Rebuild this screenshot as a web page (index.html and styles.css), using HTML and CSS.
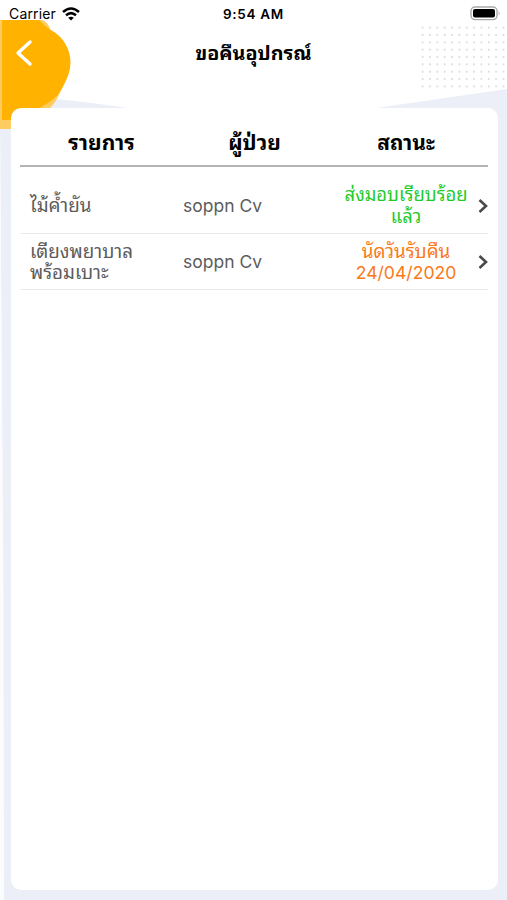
FILE: index.html
```
<!DOCTYPE html>
<html lang="th">
<head>
    <meta charset="UTF-8">
    <meta name="viewport" content="width=device-width, initial-scale=1.0">
    <title>ขอคืนอุปกรณ์</title>
    <link rel="stylesheet" href="styles.css">
</head>
<body>
    <div class="screen">
        <svg class="backdrop" width="507" height="900" viewBox="0 0 507 900">
            <defs>
                <pattern id="dots" x="419" y="24" width="7.35" height="7.35" patternUnits="userSpaceOnUse">
                    <circle cx="3.6" cy="3.6" r="1" fill="#dadada"/>
                </pattern>
            </defs>
            <path d="M0 96 C40 96 80 101 128 108 C210 122 310 118 376 108 L507 89 V900 H4 L2 400 L0 128 Z" fill="#eceff8"/>
            <path d="M0 128 L2 400 L3.5 600 V900 H0 Z" fill="#fbfcfe"/>
            <path d="M0 20 H42 Q48 22 50 29 L64 84 C60 92 57 102 49 109 L11 129 H0 Z" fill="#ffcc62"/>
            <path d="M2 20 H39 C43 24 46 27 51 30 C64 37 70.500 50 70.500 62 C70.500 73 66 81 61 90 C56 98 48 104 38 108.500 L11 120 H2 Z" fill="#ffb300"/>
            <rect x="419" y="24" width="88" height="66.2" fill="url(#dots)"/>
        </svg>

        <div class="statusbar">
            <div class="carrier">
                <span>Carrier</span>
                <svg width="18" height="14" viewBox="0 0 18 14" fill="none" stroke="#000" stroke-width="2.5">
                    <path d="M1 5 Q9 -2 17 5"/>
                    <path d="M4 8.3 Q9 4 14 8.3"/>
                    <path d="M9 13.4 L6.2 10.7 Q9 8.6 11.8 10.7 Z" fill="#000" stroke="none"/>
                </svg>
            </div>
            <div class="time">9:54 AM</div>
            <svg class="battery" width="31" height="15" viewBox="0 0 31 15">
                <rect x="1" y="1" width="26" height="12.6" rx="4" fill="#fff" stroke="#a9a9a9" stroke-width="1.4"/>
                <rect x="3" y="3" width="22" height="8.6" rx="2" fill="#000"/>
                <path d="M28.6 5 Q30.6 7.3 28.6 9.6 Z" fill="#a9a9a9"/>
            </svg>
        </div>

        <div class="header">
            <svg class="back" width="18" height="28" viewBox="0 0 18 28" fill="none" stroke="#fff" stroke-width="3.4" stroke-linecap="round" stroke-linejoin="round">
                <path d="M15 3 L3 14 L15 25"/>
            </svg>
            <h1 class="title">ขอคืนอุปกรณ์</h1>
        </div>

        <div class="card">
            <div class="row head">
                <div class="col-item">รายการ</div>
                <div class="col-patient">ผู้ป่วย</div>
                <div class="col-status">สถานะ</div>
            </div>
            <div class="row first">
                <div class="col-item">ไม้ค้ำยัน</div>
                <div class="col-patient name">soppn Cv</div>
                <div class="col-status green">ส่งมอบเรียบร้อย<br>แล้ว</div>
                <svg class="chevron" width="10" height="16" viewBox="0 0 10 16"><path d="M1.5 2 L8 8 L1.5 14"/></svg>
            </div>
            <div class="row">
                <div class="col-item">เตียงพยาบาล<br>พร้อมเบาะ</div>
                <div class="col-patient name">soppn Cv</div>
                <div class="col-status orange">นัดวันรับคืน<br><span class="date">24/04/2020</span></div>
                <svg class="chevron" width="10" height="16" viewBox="0 0 10 16"><path d="M1.5 2 L8 8 L1.5 14"/></svg>
            </div>
        </div>
    </div>
</body>
</html>
```
FILE: styles.css
```
* {
    box-sizing: border-box;
}
body {
    margin: 0;
    font-family: Inter, "Noto Sans Thai Looped", Loma, Waree, Garuda, "Noto Sans Thai", "Noto Sans", sans-serif;
    background-color: #fff;
    color: #000;
}
.screen {
    position: relative;
    width: 507px;
    height: 900px;
    overflow: hidden;
    display: flex;
    flex-direction: column;
}
.backdrop {
    position: absolute;
    top: 0;
    left: 0;
    z-index: -1;
}
.statusbar {
    display: grid;
    grid-template-columns: 1fr 1fr 1fr;
    align-items: center;
    height: 27px;
    padding: 0 6px 0 9px;
    font-size: 14px;
}
.carrier {
    display: flex;
    align-items: center;
    gap: 6px;
    letter-spacing: 0.15px;
}
.time {
    padding-right: 3px;
    text-align: center;
    font-weight: 600;
    font-size: 13.5px;
    letter-spacing: 0.7px;
}
.battery {
    justify-self: end;
}
.header {
    display: grid;
    grid-template-columns: 60px 1fr 60px;
    align-items: center;
    height: 51px;
}
.back {
    margin-left: 15px;
}
.title {
    margin: 0;
    text-align: center;
    font-size: 19.7px;
    font-weight: 700;
    line-height: 28px;
}
.card {
    width: 487px;
    height: 782px;
    margin: 30px 0 0 11px;
    padding: 0 10px 0 9px;
    border-radius: 10px;
    background-color: #fff;
}
.row {
    display: grid;
    grid-template-columns: 153px 153px 142px 20px;
    align-items: center;
    height: 56px;
    padding-top: 1px;
    border-bottom: 1px solid #eaeaea;
    color: #5c5c5c;
    font-size: 18.8px;
    line-height: 21.5px;
    white-space: nowrap;
}
.row.first {
    height: 58px;
    margin-top: 9px;
    padding-top: 2px;
}
.row.head {
    height: 59px;
    padding-top: 12px;
    border-bottom: 2px solid #b4b4b4;
    color: #000;
    font-size: 21px;
    font-weight: 700;
    text-align: center;
}
.col-item,
.col-patient {
    padding-left: 10px;
}
.col-status {
    text-align: center;
    padding-left: 18px;
}
.green {
    color: #1fcb2c;
    font-size: 18.4px;
}
.orange {
    color: #fa7a18;
}
.name {
    font-size: 17.5px;
}
.date {
    font-size: 17.6px;
}
.chevron {
    justify-self: end;
    fill: none;
    stroke: #4a4a4a;
    stroke-width: 2.6;
}
```
